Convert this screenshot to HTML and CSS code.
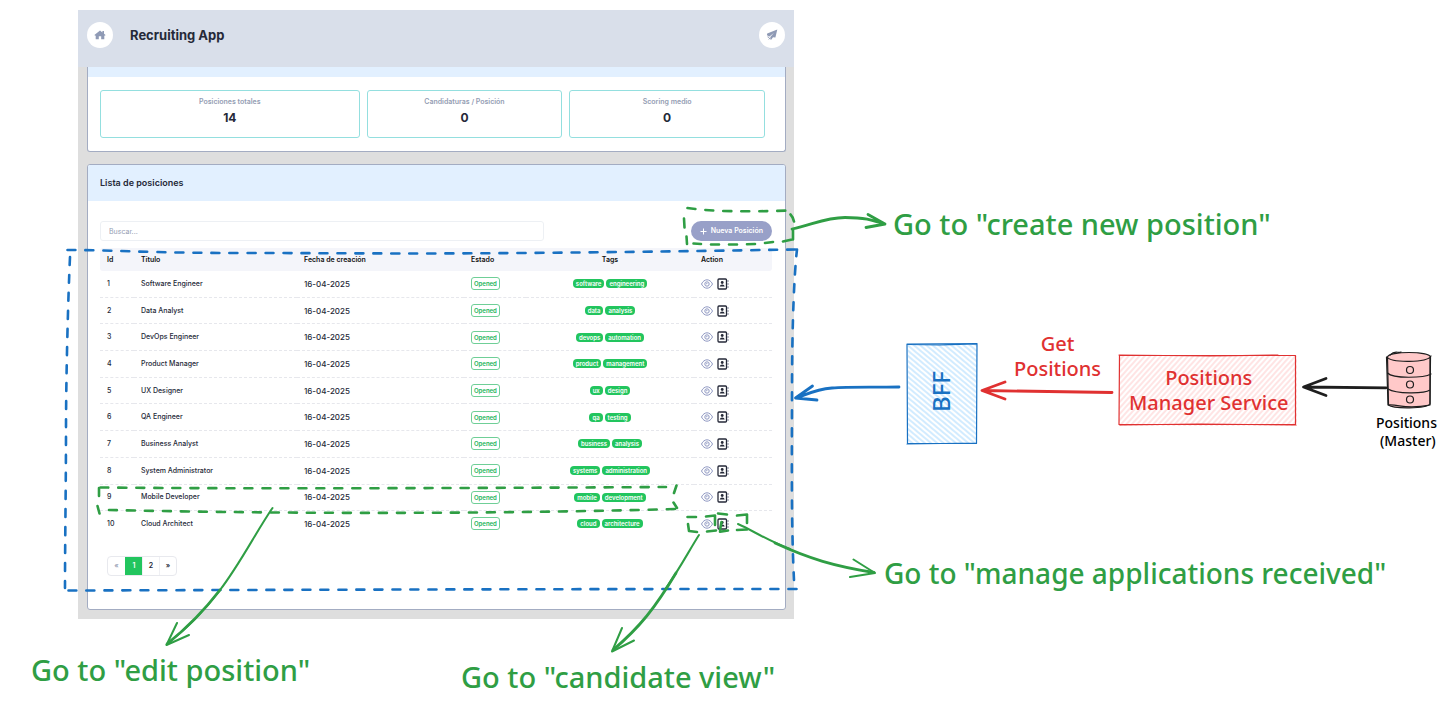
FILE: index.html
```html
<!DOCTYPE html>
<html lang="es">
<head>
<meta charset="utf-8">
<title>Recruiting App</title>
<link rel="stylesheet" href="styles.css">
</head>
<body>
<main class="board">

  <section class="app">
    <header class="topbar">
      <button class="round" type="button" aria-label="Inicio">
        <svg width="12" height="10" viewBox="0 0 12 10"><path fill="#8f9ab5" d="M6 .4 8.4 2.400V1H10v2.700L11.600 5l-.7.8-.6-.4V9.200H7.200V6.200H4.800v3H1.700V5.400l-.6.4L.4 5z"/></svg>
      </button>
      <h1 class="title">Recruiting App</h1>
      <button class="round" type="button" aria-label="Enviar">
        <svg width="12" height="12" viewBox="0 0 12 12"><path fill="#8f9ab5" d="M11.300.6 9.400 8.600 7 8.200 5.200 10.800 4.300 10.400V8L8 3.800 3.500 7.400.9 6.200 1.200 4.400z"/><path stroke="#8f9ab5" stroke-width="1" d="M1.600 7.800 3.200 8.600M2.800 10.400 4 9"/></svg>
      </button>
    </header>

    <div class="content">
      <section class="card card-stats">
        <div class="band"></div>
        <div class="stats">
          <div class="stat"><span class="stat-label">Posiciones totales</span><strong class="stat-value">14</strong></div>
          <div class="stat"><span class="stat-label">Candidaturas / Posición</span><strong class="stat-value">0</strong></div>
          <div class="stat"><span class="stat-label">Scoring medio</span><strong class="stat-value">0</strong></div>
        </div>
      </section>

      <section class="card">
        <h2 class="card-head">Lista de posiciones</h2>
        <div class="card-body">
          <div class="toolbar">
            <input class="search" type="text" placeholder="Buscar..." aria-label="Buscar">
            <button class="new" type="button"><svg width="7" height="7" viewBox="0 0 7 7"><path d="M3.500.5v6M.5 3.500h6" stroke="#fff" stroke-width="1"/></svg>Nueva Posición</button>
          </div>
          <table class="table">
            <colgroup><col class="c-id"><col class="c-title"><col class="c-date"><col class="c-state"><col class="c-tags"><col class="c-action"></colgroup>
            <thead>
              <tr><th>Id</th><th>Título</th><th>Fecha de creación</th><th>Estado</th><th class="mid">Tags</th><th>Action</th></tr>
            </thead>
            <tbody id="rows"></tbody>
          </table>
          <nav class="pages" aria-label="Páginas">
            <a class="page muted" href="#">«</a><a class="page current" href="#">1</a><a class="page" href="#">2</a><a class="page" href="#">»</a>
          </nav>
        </div>
      </section>
    </div>
  </section>

  <svg class="ink" width="1452" height="705" viewBox="0 0 1452 705" aria-hidden="true">
    <defs>
      <pattern id="hatch-blue" width="4" height="4" patternUnits="userSpaceOnUse" patternTransform="rotate(40)">
        <path d="M0 1h4" stroke="#a5d8ff" stroke-width="1"/>
      </pattern>
      <pattern id="hatch-red" width="4" height="4" patternUnits="userSpaceOnUse" patternTransform="rotate(-48)">
        <path d="M0 1h4" stroke="#ffc9c9" stroke-width="1"/>
      </pattern>
    </defs>

    <g class="blue dashed">
      <path d="M67.500 250C110 250 150 253 240 253S400 254 520 253 700 251 796 249.500"/>
      <path d="M70 257C68 300 66 380 66 430S65 540 65 588"/>
      <path d="M797 249.500C794 275 792 330 792 390S791 520 794 580" stroke-dashoffset="1"/>
      <path d="M68.500 590.500C250 590 500 589 797 589"/>
    </g>

    <g class="green dashed">
      <path d="M687.500 208C710 211.500 745 212 790 210.500"/>
      <path d="M100.500 487.500C250 489 500 488 666 487"/>
      <path d="M109 510C250 513 450 515 677 509"/>
    </g>
    <g class="green">
      <path d="M684 218.500 684.500 227.500M686.500 236.500 687 244M693.500 243.500 701 244M711 244.500 719 244.500M729 244.500H737M747 244.300 755 244M765 243 773 242M783 241.500 792 239.500M790.500 214.500Q793 217 794 221.500M793 230V239.500"/>
      <path d="M99 488V496M97.500 506 99.500 513.500M676.500 485.500 674 493M673.500 502.500 677 508"/>
      <path d="M687.500 517H696M706 516.500 715 515.500 715 525M688 524 689 531 697 532M707 531.500 716 530.500M721.500 522 720 530M718 513.500 727 514.500M720 531.800 728 530.500M737 515.500 747 514.500V523M737 530 747 529.500"/>
    </g>

    <g class="green arrow">
      <path d="M792 229C812 225 825 217.500 845 217.500S872 220 884 224M868 214.500 885 224 866 227.500"/>
      <path class="fine" d="M272.500 508C256 532 240 564 220 590S188 627 167 644M177 623 166.500 645 189 635"/>
      <path d="M220 590C203 612 188 627 167 644"/>
      <path class="fine" d="M699 535C690 549 679 570 666 588M622 628 612 651.500 634 640.500"/>
      <path d="M676 573C655 608 640 627 613 650"/>
      <path class="fine" d="M738 524C752 530 768 541 790 549M853.500 559.500 875 573 850 577"/>
      <path d="M775 543C810 559 834 566 874 572.500"/>
    </g>
    <path class="blue arrow" d="M899 387C880 387.500 850 386.500 832 388S806 395 796 398M812.500 386 795.500 398 817 400"/>
    <path class="red arrow" d="M1112 392.500 983 390.500M1005 382 982 390.500 1005 399"/>
    <path class="black arrow" d="M1386 387.800 1304 387M1326 378.500 1303.500 387 1326 395.500"/>

    <path d="M908 345H977V443H908z" fill="url(#hatch-blue)"/>
    <path class="blue box" d="M907 344 977 343.500 976.500 443.500 907.500 443.500zM908 344.500 940 345 977 344M907 444 976 443"/>
    <path d="M1120 356H1297V426H1119z" fill="url(#hatch-red)"/>
    <path class="red box" d="M1119.500 355.500H1295.500V424.500H1119zM1119 355 1210 356 1278 355M1120 425 1200 424 1296 425"/>

    <g class="black box">
      <path fill="#ffc9c9" d="M1387.500 357C1389 351 1429 351 1430.500 357L1430 404C1426 409 1393 409 1388.500 405z"/>
      <path fill="none" d="M1387 357C1391 363 1427 363 1431 356M1390 355C1396 349 1398 354 1401 352M1387.500 373C1393 379 1424 378 1431 374M1388 389C1396 394 1424 394 1430 390M1386.500 357 1388 405C1400 404 1404 410 1430 405L1430 357"/>
      <circle cx="1410" cy="370" r="3.500"/>
      <circle cx="1410" cy="384.500" r="3.500"/>
      <circle cx="1410" cy="399.500" r="3.500"/>
    </g>
  </svg>

  <p class="note green-text n-create">Go to "create new position"</p>
  <p class="note green-text n-manage">Go to "manage applications received"</p>
  <p class="note green-text n-edit">Go to "edit position"</p>
  <p class="note green-text n-view">Go to "candidate view"</p>
  <p class="label n-bff">BFF</p>
  <p class="label red-text n-get">Get<br>Positions</p>
  <p class="label red-text n-service">Positions<br>Manager Service</p>
  <p class="small-label n-first">Positions</p>
  <p class="small-label n-second">(Master)</p>
</main>
<script src="script.js"></script>
</body>
</html>
```

FILE: script.js
```js
const positions = [
  ["Software Engineer", "software", "engineering"],
  ["Data Analyst", "data", "analysis"],
  ["DevOps Engineer", "devops", "automation"],
  ["Product Manager", "product", "management"],
  ["UX Designer", "ux", "design"],
  ["QA Engineer", "qa", "testing"],
  ["Business Analyst", "business", "analysis"],
  ["System Administrator", "systems", "administration"],
  ["Mobile Developer", "mobile", "development"],
  ["Cloud Architect", "cloud", "architecture"]
];

const eye = '<svg width="12" height="10" viewBox="0 0 12 10" fill="none" stroke="#8f98c2" stroke-width="1"><path d="M.5 5C3.200-.6 8.800-.6 11.500 5 8.800 10.600 3.200 10.600.5 5z"/><circle cx="6" cy="5" r="2.200"/><path d="M5.200 4.800Q6 5 6.200 4"/></svg>';
const book = '<svg width="12" height="12" viewBox="0 0 12 12"><rect x="1" y="1" width="8.500" height="10" rx="1" fill="none" stroke="#252938" stroke-width="1.300"/><circle cx="5.200" cy="4.500" r="1.400" fill="#252938"/><path d="M2.700 8.600Q3 6.500 5.200 6.500T7.700 8.600z" fill="#252938"/><path d="M11 2v2M11 5v2M11 8v2" stroke="#80859a" stroke-width="1"/></svg>';

document.getElementById("rows").innerHTML = positions.map(([title, ...tags], i) => `
  <tr>
    <td>${i + 1}</td><td>${title}</td><td class="date">16-04-2025</td>
    <td><span class="state">Opened</span></td>
    <td><div class="tags">${tags.map(t => `<span class="tag">${t}</span>`).join("")}</div></td>
    <td><div class="actions"><button type="button" aria-label="Ver candidatos">${eye}</button><button type="button" aria-label="Gestionar solicitudes">${book}</button></div></td>
  </tr>`).join("");
```

FILE: styles.css
```css
* { box-sizing: border-box; }
body { margin: 0; background: #fff; font-family: Inter, "Open Sans", sans-serif; color: #252938; }
button { font: inherit; padding: 0; border: 0; background: none; }
h1, h2, p { margin: 0; }
svg { display: block; }

.board { position: relative; padding: 10px 0 0 78px; min-height: 100vh; overflow: hidden; }

.app { width: 716px; background: #dedede; font-size: 7px; line-height: 10px; }
.topbar { display: flex; align-items: center; gap: 17px; padding: 12px 9px 19px; background: #d9dfea; }
.round { width: 26px; height: 26px; border-radius: 50%; background: #fff; display: grid; place-items: center; }
.title { flex: 1; font-size: 13px; line-height: 18px; font-weight: 700; }

.content { display: flex; flex-direction: column; gap: 12px; padding: 0 8px 9px 9px; }
.card { background: #fff; border: 1px solid #a3acc2; border-radius: 3px; overflow: hidden; }
.card-stats { border-top: 0; border-radius: 0 0 3px 3px; }
.band { height: 10px; background: #e2f0ff; }
.stats { display: grid; grid-template-columns: 260fr 196fr 196fr; gap: 7px; padding: 13px 20px 13px 12px; }
.stat { display: flex; flex-direction: column; align-items: center; gap: 3px; height: 48px; padding-top: 6px; border: 1px solid #94dfdf; border-radius: 3px; }
.stat-label { color: #949db3; font-weight: 600; }
.stat-value { font-size: 12px; line-height: 16px; font-weight: 700; }

.card-head { padding: 13px 12px; background: #e2f0ff; font-size: 9px; line-height: 10px; font-weight: 600; }
.card-body { padding: 20px 13px 33px 12px; }
.toolbar { display: flex; justify-content: space-between; margin-bottom: 7px; }
.search { width: 66%; height: 20px; padding: 0 8px; border: 1px solid #edf0f4; border-radius: 3px; font: inherit; color: inherit; }
.search::placeholder { color: #949db3; opacity: 1; }
.new { display: flex; align-items: center; gap: 4px; height: 20px; padding: 0 9px; border-radius: 10px; background: #98a0c8; color: #fff; font-weight: 600; white-space: nowrap; }

.table { width: 100%; height: 288px; table-layout: fixed; border-collapse: separate; border-spacing: 0; }
.c-id { width: 34px; }
.c-title { width: 163px; }
.c-date { width: 167px; }
.c-state { width: 62px; }
.c-tags { width: 168px; }
th, td { padding: 0 7px; text-align: left; white-space: nowrap; vertical-align: middle; }
th { height: 23px; background: #f4f5fa; color: #111; font-weight: 600; }
th:first-child { border-radius: 3px 0 0 3px; }
th:last-child { border-radius: 0 3px 3px 0; }
td { border-bottom: 1px dashed #e6e7ec; font-weight: 500; }
tr:last-child td { border-bottom: 0; }
.mid { text-align: center; }
.date { font-size: 8px; }
.state { display: inline-block; padding: 0 2px; border: 1px solid #6fcf97; border-radius: 3px; color: #22b45a; font-size: 6px; line-height: 11px; font-weight: 600; }
.tags { display: flex; justify-content: center; gap: 2px; }
.tag { padding: 0 3px; border-radius: 4px; background: #22c55e; color: #fff; font-size: 6px; line-height: 9px; font-weight: 600; }
.actions { display: flex; align-items: center; gap: 4px; }

.pages { display: flex; width: max-content; margin: 20px 7px 0; border: 1px solid #e8e9ee; border-radius: 4px; overflow: hidden; }
.page { width: 17px; line-height: 18px; text-align: center; color: #252938; text-decoration: none; font-weight: 600; }
.page + .page { border-left: 1px solid #eff0f4; }
.page.current { background: #22c55e; border-color: #22c55e; color: #fff; }
.page.muted { color: #949db3; }

.ink { position: absolute; left: 0; top: 0; pointer-events: none; }
.ink .green, .ink .blue, .ink .red, .ink .black { fill: none; stroke-width: 2.6; stroke-linecap: round; stroke-linejoin: round; }
.ink .green { stroke: #2f9e44; }
.ink .blue { stroke: #1971c2; }
.ink .red { stroke: #e03131; }
.ink .black { stroke: #1e1e1e; }
.ink .dashed { stroke-dasharray: 8 10; }
.ink .arrow { stroke-width: 2.8; }
.ink .fine { stroke-width: 2; }
.ink .box { stroke-width: 1.2; }

.note, .label, .small-label { position: absolute; font-family: Excalifont, "Noto Sans", sans-serif; font-weight: 500; white-space: nowrap; text-align: center; }
.note { font-size: 29px; line-height: 36px; }
.label { font-size: 20px; line-height: 25px; }
.small-label { font-size: 14px; line-height: 18px; color: #000; }
.green-text { color: #2f9e44; }
.red-text { color: #e03131; }
.n-create { left: 893px; top: 206px; }
.n-manage { left: 884px; top: 555px; font-size: 28px; }
.n-edit { left: 31px; top: 652px; }
.n-view { left: 461px; top: 659px; }
.n-bff { left: 928px; top: 371px; font-size: 24px; color: #1971c2; writing-mode: vertical-rl; rotate: 180deg; }
.n-get { left: 1014px; top: 331px; }
.n-service { left: 1129px; top: 365px; }
.n-first { left: 1376px; top: 414px; }
.n-second { left: 1380px; top: 432px; }
```
